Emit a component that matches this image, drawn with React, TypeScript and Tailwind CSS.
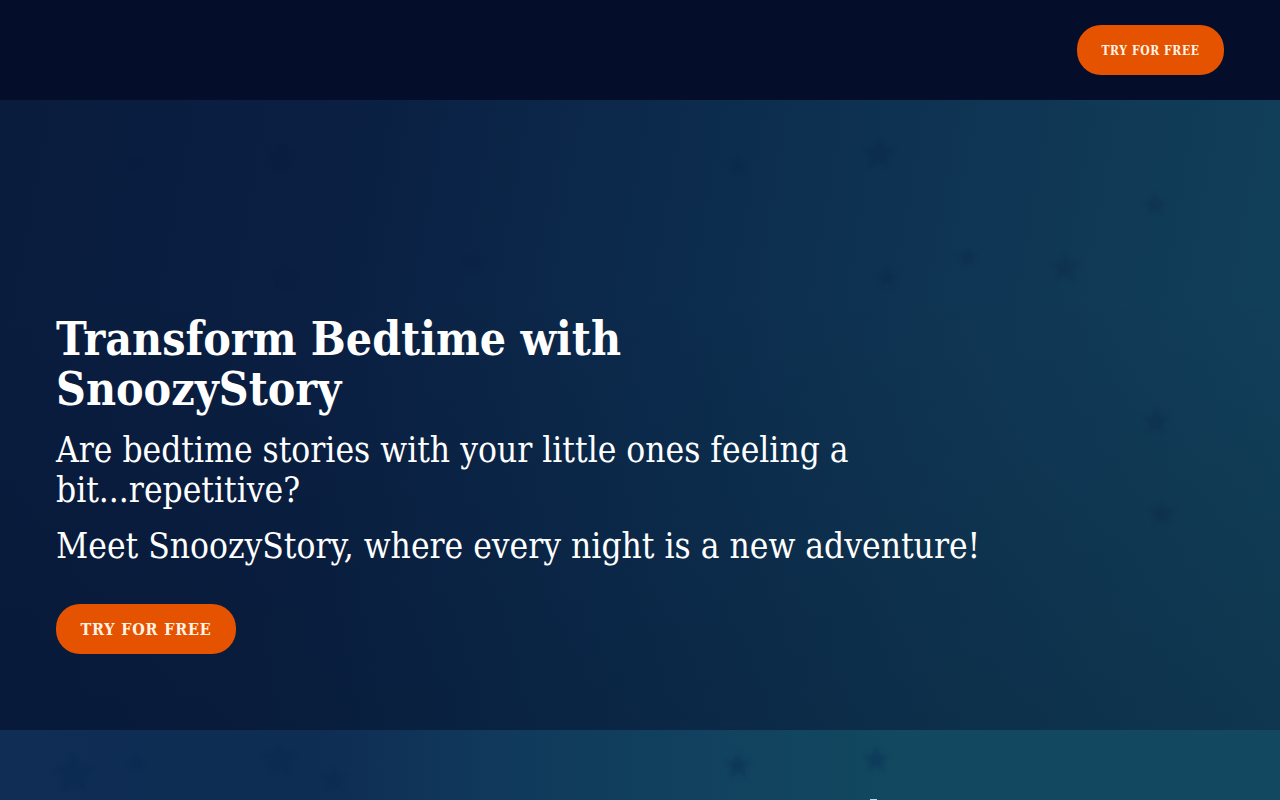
import { clsx } from 'clsx'

const heroStars = [
  { x: 282, y: 58, size: 14 },
  { x: 136, y: 62, size: 9 },
  { x: 285, y: 178, size: 12 },
  { x: 474, y: 162, size: 13 },
  { x: 738, y: 66, size: 11 },
  { x: 879, y: 54, size: 18 },
  { x: 887, y: 178, size: 13 },
  { x: 968, y: 158, size: 10 },
  { x: 1065, y: 168, size: 16 },
  { x: 1155, y: 105, size: 13 },
  { x: 1156, y: 322, size: 15 },
  { x: 1162, y: 414, size: 14 },
]

const storyStars = [
  { x: 74, y: 44, size: 22 },
  { x: 136, y: 34, size: 12 },
  { x: 279, y: 30, size: 20 },
  { x: 334, y: 50, size: 13 },
  { x: 738, y: 36, size: 14 },
  { x: 876, y: 30, size: 14 },
]

type Star = { x: number; y: number; size: number }

function Stars({ stars, className }: { stars: Star[]; className?: string }) {
  return (
    <svg aria-hidden="true" className={clsx('pointer-events-none absolute inset-0 h-full w-full blur-[2px]', className)}>
      {stars.map((s) => (
        <path
          key={`${s.x}-${s.y}`}
          d="M0-1 .27-.35.95-.31.43.14.59.81 0 .45-.59.81-.43.14-.95-.31-.27-.35Z"
          transform={`translate(${s.x} ${s.y}) scale(${s.size})`}
        />
      ))}
    </svg>
  )
}

function TryButton({ className }: { className?: string }) {
  return (
    <a
      href="#try"
      className={clsx(
        'inline-flex h-[50px] items-center justify-center rounded-[24px] bg-[#e65300] pt-px font-bold uppercase text-[#fff3e6]',
        className,
      )}
    >
      Try for free
    </a>
  )
}

export default function App() {
  return (
    <div className="min-h-screen bg-[#10405c] font-['Roboto_Slab','DejaVu_Serif_Condensed','DejaVu_Serif',serif] text-white">
      <header className="flex justify-end bg-[#040d29] px-14 py-[25px]">
        <TryButton className="w-[147px] text-xs tracking-wider" />
      </header>

      <main>
        <section className="relative bg-[linear-gradient(to_bottom,transparent_30%,rgba(2,12,30,0.2)),linear-gradient(100deg,#091c3e_0%,#0a1f42_25%,#0c2b4d_50%,#0f3654_72%,#12415b_100%)] px-14 pt-[214px] pb-[76px]">
          <Stars stars={heroStars} className="fill-[#061c40] opacity-20" />
          <div className="relative max-w-[960px]">
            <h1 className="max-w-[640px] text-[46px] leading-[50px] font-bold">Transform Bedtime with SnoozyStory</h1>
            <p className="mt-4 text-[35px] leading-10">
              Are bedtime stories with your little ones feeling a bit...repetitive?
            </p>
            <p className="mt-4 text-[35px] leading-10">Meet SnoozyStory, where every night is a new adventure!</p>
            <TryButton className="mt-[38px] w-[180px] text-base tracking-wider" />
          </div>
        </section>

        <section className="relative flex min-h-[70px] items-end bg-[linear-gradient(to_right,#0f2d55_0%,#0e2d52_25%,#10385a_37%,#11405e_52%,#124860_70%,#124860_100%)]">
          <Stars stars={storyStars} className="fill-[#06284f] opacity-35" />
          <span aria-hidden="true" className="ml-[68%] h-px w-[7px] bg-[#b5dcf5]" />
        </section>
      </main>
    </div>
  )
}
